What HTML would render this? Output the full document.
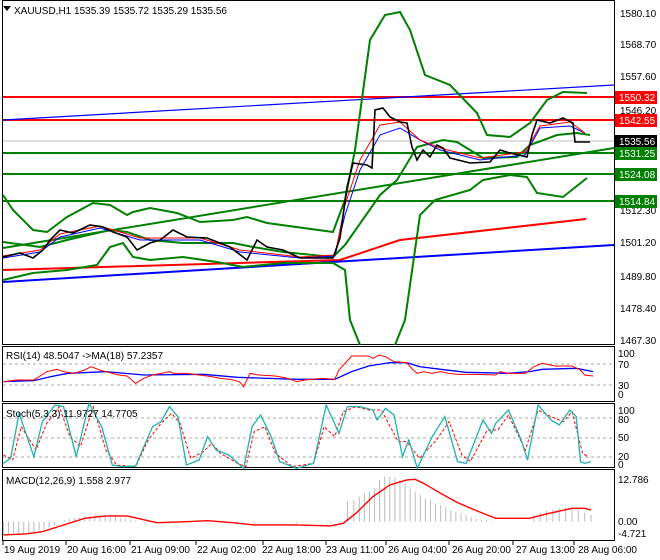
<!DOCTYPE html>
<html><head><meta charset="utf-8"><style>
body{margin:0;background:#fff;width:660px;height:560px;overflow:hidden}
svg{display:block}
text{font-family:"Liberation Sans",sans-serif;font-size:10px;fill:#000}
.ns{vector-effect:non-scaling-stroke}
</style></head><body>
<svg width="660" height="560" viewBox="0 0 660 560">
<rect width="660" height="560" fill="#fff"/>
<g fill="none" stroke="#000" stroke-width="1">
<rect x="2.5" y="0.5" width="612" height="344"/>
<rect x="2.5" y="346.5" width="612" height="55"/>
<rect x="2.5" y="403.5" width="612" height="64"/>
<rect x="2.5" y="469.5" width="612" height="71"/>
</g>
<line x1="3" y1="141" x2="614" y2="141" stroke="#c0c0c0"/>
<line x1="3" y1="97" x2="614" y2="97" stroke="#f00" stroke-width="2"/>
<line x1="3" y1="120" x2="614" y2="120" stroke="#f00" stroke-width="2"/>
<line x1="3" y1="153" x2="614" y2="153" stroke="#008000" stroke-width="2"/>
<line x1="3" y1="174" x2="614" y2="174" stroke="#008000" stroke-width="2"/>
<line x1="3" y1="201" x2="614" y2="201" stroke="#008000" stroke-width="2"/>
<line x1="3" y1="120" x2="614" y2="85" stroke="#00f" stroke-width="1.2"/>
<line x1="3" y1="248" x2="614" y2="148" stroke="#008000" stroke-width="2"/>
<polyline points="3,270 340,260 400,240 586,219" fill="none" stroke="#f00" stroke-width="2"/>
<line x1="3" y1="282" x2="614" y2="245" stroke="#00f" stroke-width="2"/>
<g fill="none" stroke="#008000" stroke-width="2">
<polyline points="3,195 13,210 33,230 47,232 67,217 93,203 110,205 127,215 133,212 150,208 177,213 200,222 233,220 247,217 267,223 333,232 345,200 355,150 370,40 385,15 400,12 410,30 425,75 450,85 477,113 487,135 510,137 530,123 547,100 563,92 587,93"/>
<path d="M3,280 L33,273 67,270 97,265 110,247 123,243 133,257 150,260 183,257 217,262 243,267 283,263 333,263 345,270 350,320 360,345 M395,345 L405,320 420,215 435,200 470,190 483,180 510,175 527,177 537,193 563,197 587,178"/>
<polyline points="3,242 40,247 67,240 110,230 127,232 150,240 183,243 233,243 253,247 283,252 333,257 345,245 380,195 397,180 417,147 443,140 457,142 483,158 517,157 530,145 557,135 577,133 590,135"/>
</g>
<polyline points="3,258 40,252 60,237 100,228 140,240 200,240 240,252 300,258 335,256 345,215 360,170 380,135 400,128 420,140 440,150 480,160 525,155 540,128 570,126 585,133" fill="none" stroke="#00f" stroke-width="1"/>
<polyline points="3,256 40,250 60,234 100,226 140,238 200,238 240,250 300,257 335,255 345,205 360,160 380,125 400,122 420,140 440,148 480,158 525,152 540,126 570,122 585,133" fill="none" stroke="#f00" stroke-width="1"/>
<polyline points="3,257 20,253 33,258 43,250 50,240 60,230 73,233 90,225 103,227 113,232 127,237 137,250 150,243 160,240 173,230 187,237 207,238 220,243 230,247 247,260 257,240 267,247 283,250 300,258 333,258 340,238 347,187 353,163 367,165 372,168 375,110 383,108 390,117 400,122 407,123 412,147 417,160 423,150 430,157 437,145 443,148 450,158 470,163 490,162 500,150 510,153 527,157 532,135 537,120 550,123 563,118 573,123 575,142 580,142 590,142" fill="none" stroke="#000" stroke-width="1.6"/>
<path d="M3,6 l8,0 l-4,5z" fill="#000"/>
<text x="14" y="14">XAUUSD,H1  1535.39 1535.72 1535.29 1535.56</text>
<g>
<text x="620" y="17">1580.10</text>
<text x="620" y="48">1568.70</text>
<text x="620" y="80">1557.60</text>
<text x="620" y="114">1546.20</text>
<text x="620" y="214">1512.30</text>
<text x="620" y="246">1501.20</text>
<text x="620" y="280">1489.80</text>
<text x="620" y="312">1478.40</text>
<text x="620" y="344">1467.30</text>
</g>
<g>
<rect x="615" y="91" width="42" height="13" fill="#f00"/><text x="619" y="101" style="fill:#fff">1550.32</text>
<rect x="615" y="114" width="42" height="13" fill="#f00"/><text x="619" y="124" style="fill:#fff">1542.55</text>
<rect x="615" y="135" width="42" height="13" fill="#000"/><text x="619" y="145" style="fill:#fff">1535.56</text>
<rect x="615" y="147" width="42" height="13" fill="#008000"/><text x="619" y="157" style="fill:#fff">1531.25</text>
<rect x="615" y="168" width="42" height="13" fill="#008000"/><text x="619" y="178" style="fill:#fff">1524.08</text>
<rect x="615" y="195" width="42" height="13" fill="#008000"/><text x="619" y="205" style="fill:#fff">1514.84</text>
</g>
<g stroke="#aaa" stroke-dasharray="3,3">
<line x1="3" y1="364" x2="614" y2="364"/><line x1="3" y1="385" x2="614" y2="385"/>
<line x1="3" y1="418" x2="614" y2="418"/><line x1="3" y1="438" x2="614" y2="438"/><line x1="3" y1="457" x2="614" y2="457"/>
</g>
<g transform="matrix(0.4237 0 0 0.3333 0 340)" fill="none">
<polyline class="ns" stroke="#00f" stroke-width="1.3" points="8,125 80,122 120,110 160,100 250,95 340,105 480,103 560,112 700,118 790,118 830,95 870,78 920,68 960,68 990,80 1040,88 1100,97 1200,100 1250,95 1280,88 1360,85 1400,95"/>
<polyline class="ns" stroke="#f00" stroke-width="1" points="8,125 40,120 80,120 110,95 135,88 150,95 175,100 200,90 215,80 235,90 250,95 280,105 300,108 320,130 340,115 360,105 380,100 400,95 410,100 440,100 470,105 500,110 520,115 545,118 565,125 575,140 590,100 610,105 650,108 680,115 700,125 720,120 760,115 790,118 800,90 830,48 870,48 880,55 895,45 910,50 930,65 960,68 975,90 985,100 1000,95 1020,100 1040,95 1060,100 1080,103 1120,103 1170,105 1180,95 1200,100 1240,100 1260,80 1280,70 1310,78 1350,78 1370,90 1380,105 1400,108"/>
<polyline class="ns" stroke="#f00" stroke-width="1" stroke-dasharray="3,2" points="8,345 30,360 50,260 85,330 110,250 140,200 165,290 190,320 220,200 250,330 275,375 320,380 350,300 380,250 405,220 425,250 450,355 480,335 500,310 520,340 560,370 580,380 600,275 625,260 650,340 690,380 740,370 765,260 790,290 810,215 840,200 870,210 900,210 940,305 960,305 990,355 1030,300 1060,245 1090,345 1110,365 1150,270 1175,270 1200,225 1240,330 1270,210 1300,230 1330,245 1350,215 1375,340 1390,352"/>
<polyline class="ns" stroke="#20b2aa" stroke-width="1.3" points="8,370 25,355 45,220 80,350 100,245 130,195 150,200 180,350 210,190 240,260 265,375 290,380 320,378 360,260 380,245 400,200 420,230 440,375 470,360 490,290 510,330 540,345 575,385 595,260 615,225 640,290 660,365 700,385 740,370 770,195 800,280 820,200 850,200 880,210 890,240 910,205 930,225 950,350 965,300 985,385 1020,290 1050,230 1080,365 1100,370 1140,240 1160,280 1170,250 1200,210 1230,300 1245,360 1270,195 1300,240 1320,255 1345,210 1360,230 1370,365 1380,370 1395,365"/>
<path class="ns" stroke="#bbb" stroke-width="1" d="M8,545V582M20,545V582M32,545V582M44,545V581M56,545V580M68,545V578M80,545V575M92,545V572M104,545V568M116,545V562M128,545V556M152,545V540M164,545V537M176,545V534M188,545V531M200,545V528M212,545V526M224,545V525M236,545V525M248,545V526M260,545V527M272,545V530M284,545V534M296,545V537M308,545V540M320,545V542M340,545V547M400,545V549M560,545V552M600,545V550M700,545V550M780,545V550M820,545V485M835,545V480M848,545V470M860,545V460M872,545V455M884,545V445M896,545V420M908,545V410M920,545V410M932,545V412M944,545V420M956,545V430M968,545V445M980,545V455M992,545V465M1004,545V475M1016,545V480M1028,545V490M1040,545V495M1052,545V500M1064,545V510M1076,545V515M1088,545V520M1100,545V525M1112,545V530M1124,545V535M1136,545V538M1148,545V540M1160,545V543M1260,545V525M1275,545V518M1290,545V512M1305,545V508M1320,545V505M1335,545V503M1350,545V505M1365,545V510M1380,545V518M1395,545V525"/>
<polyline class="ns" stroke="#f00" stroke-width="1.4" points="8,585 60,582 100,575 150,555 200,535 250,528 300,528 370,548 440,545 490,542 550,548 600,555 700,555 780,558 810,550 840,520 880,470 920,435 960,420 980,418 1000,430 1040,460 1080,488 1130,515 1170,535 1250,535 1290,522 1350,505 1380,505 1395,510"/>
</g>
<text x="6" y="359">RSI(14) 48.5047  -&gt;MA(18) 57.2357</text>
<text x="618" y="357">100</text><text x="618" y="368">70</text><text x="618" y="389">30</text><text x="618" y="398">0</text>
<text x="6" y="417">Stoch(5,3,3) 11.9727 14.7705</text>
<text x="618" y="414">100</text><text x="618" y="423">80</text><text x="618" y="441">50</text><text x="618" y="460">20</text><text x="618" y="468">0</text>
<text x="6" y="484">MACD(12,26,9) 1.558 2.977</text>
<text x="618" y="483">12.786</text><text x="618" y="525">0.00</text><text x="618" y="537">-4.721</text>
<g stroke="#000"><path d="M3,541v4M66,541v4M130,541v4M196,541v4M263,541v4M326,541v4M386,541v4M449,541v4M513,541v4M574,541v4"/></g>
<g>
<text x="4" y="553">19 Aug 2019</text><text x="67" y="553">20 Aug 16:00</text><text x="131" y="553">21 Aug 09:00</text><text x="197" y="553">22 Aug 02:00</text><text x="262" y="553">22 Aug 18:00</text><text x="326" y="553">23 Aug 11:00</text><text x="388" y="553">26 Aug 04:00</text><text x="452" y="553">26 Aug 20:00</text><text x="516" y="553">27 Aug 13:00</text><text x="578" y="553">28 Aug 06:00</text>
</g>
</svg>
</body></html>
